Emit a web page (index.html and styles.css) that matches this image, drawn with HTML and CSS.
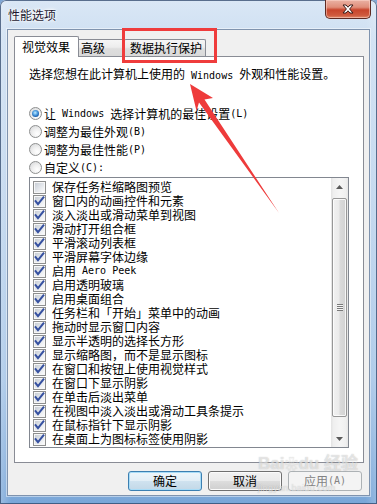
FILE: index.html
```html
<!DOCTYPE html>
<html lang="zh-CN">
<head>
<meta charset="utf-8">
<title>性能选项</title>
<link rel="stylesheet" href="styles.css">
</head>
<body>
<div class="window">
  <div class="titlebar">
    <span class="title">性能选项</span>
    <div class="close">
      <svg width="14" height="10" viewBox="0 0 14 10"><path d="M2 1h3l2 2.2L9 1h3L8.6 5 12 9H9L7 6.8 5 9H2l3.4-4z" fill="#fff" stroke="#3b1c18" stroke-width="1" stroke-linejoin="round"/></svg>
    </div>
  </div>
  <div class="client">
    <div class="tabs">
      <div class="tab active">视觉效果</div>
      <div class="tab t2">高级</div>
      <div class="tab t3">数据执行保护</div>
    </div>
    <div class="panel">
      <p class="desc">选择您想在此计算机上使用的<span class="lat"> Windows </span>外观和性能设置。</p>
      <div class="radios">
        <div class="radio-row"><span class="radio checked"></span>让<span class="lat"> Windows </span>选择计算机的最佳设置<span class="lat">(L)</span></div>
        <div class="radio-row"><span class="radio"></span>调整为最佳外观<span class="lat">(B)</span></div>
        <div class="radio-row"><span class="radio"></span>调整为最佳性能<span class="lat">(P)</span></div>
        <div class="radio-row"><span class="radio"></span>自定义<span class="lat">(C):</span></div>
      </div>
      <div class="listbox">
        <ul class="items">
          <li><span class="cb"></span>保存任务栏缩略图预览</li>
          <li><span class="cb"><svg viewBox="0 0 11 11"><path d="M1.6 5.2l2.4 3L9.4 1.4" class="ck"/></svg></span>窗口内的动画控件和元素</li>
          <li><span class="cb"><svg viewBox="0 0 11 11"><path d="M1.6 5.2l2.4 3L9.4 1.4" class="ck"/></svg></span>淡入淡出或滑动菜单到视图</li>
          <li><span class="cb"><svg viewBox="0 0 11 11"><path d="M1.6 5.2l2.4 3L9.4 1.4" class="ck"/></svg></span>滑动打开组合框</li>
          <li><span class="cb"><svg viewBox="0 0 11 11"><path d="M1.6 5.2l2.4 3L9.4 1.4" class="ck"/></svg></span>平滑滚动列表框</li>
          <li><span class="cb"><svg viewBox="0 0 11 11"><path d="M1.6 5.2l2.4 3L9.4 1.4" class="ck"/></svg></span>平滑屏幕字体边缘</li>
          <li><span class="cb"><svg viewBox="0 0 11 11"><path d="M1.6 5.2l2.4 3L9.4 1.4" class="ck"/></svg></span>启用<span class="lat"> Aero Peek</span></li>
          <li><span class="cb"><svg viewBox="0 0 11 11"><path d="M1.6 5.2l2.4 3L9.4 1.4" class="ck"/></svg></span>启用透明玻璃</li>
          <li><span class="cb"><svg viewBox="0 0 11 11"><path d="M1.6 5.2l2.4 3L9.4 1.4" class="ck"/></svg></span>启用桌面组合</li>
          <li><span class="cb"><svg viewBox="0 0 11 11"><path d="M1.6 5.2l2.4 3L9.4 1.4" class="ck"/></svg></span>任务栏和「开始」菜单中的动画</li>
          <li><span class="cb"><svg viewBox="0 0 11 11"><path d="M1.6 5.2l2.4 3L9.4 1.4" class="ck"/></svg></span>拖动时显示窗口内容</li>
          <li><span class="cb"><svg viewBox="0 0 11 11"><path d="M1.6 5.2l2.4 3L9.4 1.4" class="ck"/></svg></span>显示半透明的选择长方形</li>
          <li><span class="cb"><svg viewBox="0 0 11 11"><path d="M1.6 5.2l2.4 3L9.4 1.4" class="ck"/></svg></span>显示缩略图，而不是显示图标</li>
          <li><span class="cb"><svg viewBox="0 0 11 11"><path d="M1.6 5.2l2.4 3L9.4 1.4" class="ck"/></svg></span>在窗口和按钮上使用视觉样式</li>
          <li><span class="cb"><svg viewBox="0 0 11 11"><path d="M1.6 5.2l2.4 3L9.4 1.4" class="ck"/></svg></span>在窗口下显示阴影</li>
          <li><span class="cb"><svg viewBox="0 0 11 11"><path d="M1.6 5.2l2.4 3L9.4 1.4" class="ck"/></svg></span>在单击后淡出菜单</li>
          <li><span class="cb"><svg viewBox="0 0 11 11"><path d="M1.6 5.2l2.4 3L9.4 1.4" class="ck"/></svg></span>在视图中淡入淡出或滑动工具条提示</li>
          <li><span class="cb"><svg viewBox="0 0 11 11"><path d="M1.6 5.2l2.4 3L9.4 1.4" class="ck"/></svg></span>在鼠标指针下显示阴影</li>
          <li><span class="cb"><svg viewBox="0 0 11 11"><path d="M1.6 5.2l2.4 3L9.4 1.4" class="ck"/></svg></span>在桌面上为图标标签使用阴影</li>
        </ul>
        <div class="scrollbar">
          <div class="sb-btn"><svg width="7" height="4" viewBox="0 0 7 4"><path d="M3.5 0L7 4H0z" fill="#5a5a5a"/></svg></div>
          <div class="sb-track">
            <div class="thumb"><span class="grip"></span></div>
          </div>
          <div class="sb-btn"><svg width="7" height="4" viewBox="0 0 7 4"><path d="M0 0h7L3.5 4z" fill="#5a5a5a"/></svg></div>
        </div>
      </div>
    </div>
    <div class="buttons">
      <div class="btn default">确定</div>
      <div class="btn">取消</div>
      <div class="btn disabled">应用<span class="lat">(A)</span></div>
    </div>
  </div>

  <div class="watermark">
    <div class="wm-big">Bai<span class="paw">❀</span>du 经验</div>
    <div class="wm-small">jingyan.baidu.com</div>
  </div>
  <div class="highlight"></div>
  <svg class="arrow" width="377" height="504" viewBox="0 0 377 504">
    <polygon points="190,84 213,98 204.5,99.5 279,213 199,102.5 196.5,111" fill="#ee3b3b"/>
  </svg>
</div>
</body>
</html>
```

FILE: styles.css
```css
* { box-sizing: border-box; }
html, body { margin: 0; padding: 0; }
body {
  width: 377px;
  height: 504px;
  overflow: hidden;
  font-family: "Noto Sans CJK SC", "Liberation Sans", sans-serif;
  font-size: 12px;
  color: #000;
  background: #7fa6d4;
}
.lat {
  font-family: "DejaVu Sans Mono", "Liberation Mono", monospace;
  font-size: 10px;
  white-space: pre;
}

/* window frame */
.window {
  position: relative;
  width: 377px;
  height: 504px;
  padding: 0 7px 8px 7px;
  display: flex;
  flex-direction: column;
  border-radius: 6px 6px 0 0;
  background:
    linear-gradient(to right, rgba(255,255,255,0.25), rgba(255,255,255,0) 3%, rgba(255,255,255,0) 97%, rgba(255,255,255,0.2)),
    linear-gradient(to bottom, #dae7f5 0%, #cddff2 8%, #bdd4ed 40%, #a6c5e7 75%, #79a6d8 100%);
  box-shadow: inset 0 0 0 1px rgba(45,70,105,0.75);
}
.titlebar {
  height: 29px;
  display: flex;
  align-items: flex-start;
}
.title {
  margin: 7px 0 0 1px;
  line-height: 16px;
  color: #1c1830;
  text-shadow: 0 0 5px #fff, 0 0 3px #fff, 0 0 2px #fff;
}
.close {
  margin-left: auto;
  margin-right: -1px;
  width: 46px;
  height: 19px;
  display: flex;
  align-items: center;
  justify-content: center;
  border: 1px solid #5e2a22;
  border-top: none;
  border-radius: 0 0 5px 5px;
  background: linear-gradient(to bottom, #eab2a4 0%, #e08e7a 40%, #c8452c 55%, #cf5a3e 85%, #e08a6a 100%);
  box-shadow: inset 0 0 0 1px rgba(255,220,210,0.5);
}

/* client area */
.client {
  flex: 1;
  display: flex;
  flex-direction: column;
  background: #f0f0f0;
  border: 1px solid #7f93ae;
  padding: 6px 5px 0 6px;
  box-shadow: 0 0 0 1px rgba(255,255,255,0.45);
}

/* tabs */
.tabs {
  display: flex;
  align-items: flex-end;
  height: 20px;
  position: relative;
  z-index: 2;
}
.tab {
  height: 17px;
  border: 1px solid #898c95;
  border-bottom: none;
  line-height: 16px;
  white-space: nowrap;
  background: linear-gradient(to bottom, #f6f6f6 0%, #ededed 45%, #dedede 55%, #d9d9d9 100%);
  border-radius: 2px 2px 0 0;
}
.tab.active {
  position: relative;
  z-index: 3;
  width: 65px;
  height: 21px;
  margin-bottom: -1px;
  padding-left: 7px;
  line-height: 20px;
  background: #fff;
}
.tab.t2 {
  width: 48px;
  margin-left: -2px;
  padding-left: 3px;
}
.tab.t3 {
  width: 82px;
  margin-left: -1px;
  padding-left: 5px;
}

/* panel */
.panel {
  position: relative;
  z-index: 1;
  width: 350px;
  height: 407px;
  border: 1px solid #898c95;
  background: #fff;
  padding: 10px 0 0 14px;
}
.desc {
  margin: 0;
  height: 14px;
  line-height: 14px;
  white-space: nowrap;
}
.radios {
  margin-top: 23px;
}
.radio-row {
  display: flex;
  align-items: center;
  height: 18px;
  white-space: nowrap;
}
.radio {
  position: relative;
  flex: none;
  width: 13px;
  height: 13px;
  margin-right: 2px;
  border-radius: 50%;
  border: 1px solid #8e8f8f;
  background: radial-gradient(circle at 65% 70%, #ffffff 0%, #f1f1f1 40%, #d3d4d6 100%);
}
.radio.checked::after {
  content: "";
  position: absolute;
  left: 2px;
  top: 2px;
  width: 7px;
  height: 7px;
  border-radius: 50%;
  background: radial-gradient(circle at 45% 40%, #c5ecff 0%, #5aa8e6 35%, #1a5fae 70%, #0d3c78 100%);
}

/* list box */
.listbox {
  margin-top: 1px;
  width: 320px;
  height: 271px;
  border: 1px solid #828790;
  display: flex;
  background: #fff;
}
.items {
  flex: 1;
  list-style: none;
  margin: 0;
  padding: 2px 0 0 3px;
  overflow: hidden;
}
.items li {
  display: flex;
  align-items: center;
  height: 14px;
  line-height: 14px;
  white-space: nowrap;
}
.cb {
  flex: none;
  width: 13px;
  height: 13px;
  margin-right: 6px;
  border: 1px solid #8e8f8f;
  background: linear-gradient(135deg, #c2c8d0 0%, #dfe3e8 45%, #f4f5f7 80%, #fff 100%);
  box-shadow: inset 0 0 0 1px #f7f7f7;
  display: flex;
}
.cb svg {
  width: 11px;
  height: 11px;
}
.ck {
  fill: none;
  stroke: #3550a0;
  stroke-width: 2;
  stroke-linecap: square;
  stroke-linejoin: miter;
}

/* scrollbar */
.scrollbar {
  flex: none;
  width: 17px;
  display: flex;
  flex-direction: column;
  background: linear-gradient(to right, #e3e3e3 0%, #efefef 15%, #f5f5f5 50%, #f0f0f0 85%, #e6e6e6 100%);
}
.sb-btn {
  height: 17px;
  display: flex;
  align-items: center;
  justify-content: center;
  flex: none;
}
.sb-track {
  flex: 1;
  padding: 3px 1px 0 1px;
}
.thumb {
  height: 219px;
  border: 1px solid #979797;
  border-radius: 2px;
  background: linear-gradient(to right, #f1f1f1 0%, #ebebeb 45%, #dadada 55%, #d2d2d2 100%);
  box-shadow: inset 0 0 0 1px rgba(255,255,255,0.8);
  display: flex;
  align-items: center;
  justify-content: center;
}
.grip {
  width: 6px;
  height: 7px;
  background: repeating-linear-gradient(to bottom, #7a7a7a 0, #7a7a7a 1px, #f5f5f5 1px, #f5f5f5 2px);
}

/* buttons */
.buttons {
  display: flex;
  justify-content: flex-end;
  gap: 6px;
  margin: 8px 2px 0 0;
}
.btn {
  width: 74px;
  height: 20px;
  border: 1px solid #707070;
  border-radius: 3px;
  display: flex;
  align-items: center;
  justify-content: center;
  line-height: 16px;
  background: linear-gradient(to bottom, #f2f2f2 0%, #ebebeb 48%, #dddddd 52%, #cfcfcf 100%);
  box-shadow: inset 0 0 0 1px #fbfbfb;
}
.btn.default {
  border-color: #3c7fb1;
  background: linear-gradient(to bottom, #eef6fb 0%, #e2eef6 48%, #cfe2ef 52%, #c3d8e7 100%);
  box-shadow: inset 0 0 0 1px #a8dcf7;
}
.btn.disabled {
  border-color: #adb2b5;
  background: #f4f4f4;
  box-shadow: none;
  color: #838383;
}

/* overlays */
.watermark {
  position: absolute;
  z-index: 8;
  left: 258px;
  top: 454px;
  width: 95px;
  color: rgba(255,255,255,0.55);
  text-shadow: 0 0 1px rgba(110,110,110,0.45);
  font-family: "Liberation Sans", "Noto Sans CJK SC", sans-serif;
  pointer-events: none;
}
.wm-big {
  font-size: 17px;
  font-weight: bold;
  line-height: 20px;
  white-space: nowrap;
}
.paw {
  font-size: 14px;
}
.wm-small {
  font-size: 9px;
  line-height: 12px;
  margin-top: 8px;
  letter-spacing: 0.3px;
}
.highlight {
  position: absolute;
  z-index: 9;
  left: 122px;
  top: 28px;
  width: 95px;
  height: 35px;
  border: 3px solid #ef3c3c;
  pointer-events: none;
}
.arrow {
  position: absolute;
  z-index: 10;
  left: 0;
  top: 0;
  pointer-events: none;
}
```
